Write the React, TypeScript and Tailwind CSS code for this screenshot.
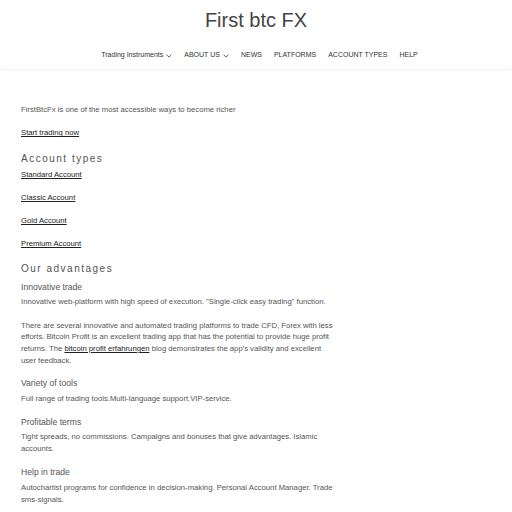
import React from "react";

const font = { fontFamily: '"Liberation Sans", Arial, sans-serif' };

function Chevron() {
  return (
    <svg width="6" height="4" viewBox="0 0 6 4" className="ml-[3px] inline-block" fill="none" stroke="#555" strokeWidth="0.9">
      <path d="M0.6 0.8 L3 3.1 L5.4 0.8" />
    </svg>
  );
}

export default function App() {
  return (
    <div className="min-h-[512px] bg-white text-[#555]" style={font}>
      <header className="border-b border-[#f0f0f0] shadow-[0_1px_2px_rgba(0,0,0,0.03)]">
        <h1 className="pt-[7px] text-center text-[20px] leading-[26px] text-[#444]">First btc FX</h1>
        <nav className="mt-[9px] flex h-[27px] items-center justify-center gap-[12px] pl-[7px] text-[7px] text-[#333]">
          <span className="flex items-center">Trading Instruments<Chevron /></span>
          <span className="flex items-center">ABOUT US<Chevron /></span>
          <span>NEWS</span>
          <span>PLATFORMS</span>
          <span>ACCOUNT TYPES</span>
          <span>HELP</span>
        </nav>
      </header>
      <main className="w-[333px] pl-[21px] pt-[34px] text-[7.7px] leading-[11.67px]">
        <p>FirstBtcFx is one of the most accessible ways to become richer</p>
        <p className="mt-[11.5px]"><a className="text-[#222] underline">Start trading now</a></p>
        <h2 className="mt-[12px] text-[10px] leading-[15px] tracking-[1.5px] text-[#555]">Account types</h2>
        <p className="mt-[3px]"><a className="text-[#222] underline">Standard Account</a></p>
        <p className="mt-[11.5px]"><a className="text-[#222] underline">Classic Account</a></p>
        <p className="mt-[11.5px]"><a className="text-[#222] underline">Gold Account</a></p>
        <p className="mt-[11.5px]"><a className="text-[#222] underline">Premium Account</a></p>
        <h2 className="mt-[11px] text-[10px] leading-[15px] tracking-[1.5px] text-[#555]">Our advantages</h2>
        <h3 className="mt-[5px] text-[8.6px] leading-[12px] text-[#555]">Innovative trade</h3>
        <p className="mt-[3px]">Innovative web-platform with high speed of execution. "Single-click easy trading" function.</p>
        <p className="mt-[12px]">
          There are several innovative and automated trading platforms to trade CFD, Forex with less efforts. Bitcoin Profit is an excellent trading app that has the potential to provide huge profit returns. The <a className="text-[#222] underline">bitcoin profit erfahrungen</a> blog demonstrates the app's validity and excellent user feedback.
        </p>
        <h3 className="mt-[11px] text-[8.6px] leading-[12px] text-[#555]">Variety of tools</h3>
        <p className="mt-[4px]">Full range of trading tools.Multi-language support.VIP-service.</p>
        <h3 className="mt-[11px] text-[8.6px] leading-[12px] text-[#555]">Profitable terms</h3>
        <p className="mt-[3px]">Tight spreads, no commissions. Campaigns and bonuses that give advantages. Islamic accounts.</p>
        <h3 className="mt-[12px] text-[8.6px] leading-[12px] text-[#555]">Help in trade</h3>
        <p className="mt-[4px]">Autochartist programs for confidence in decision-making. Personal Account Manager. Trade sms-signals.</p>
      </main>
    </div>
  );
}
